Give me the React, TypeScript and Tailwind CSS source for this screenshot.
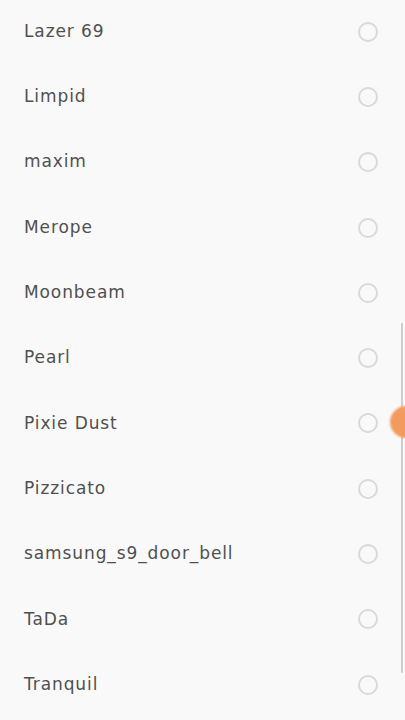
const sounds = [
  "Lazer 69",
  "Limpid",
  "maxim",
  "Merope",
  "Moonbeam",
  "Pearl",
  "Pixie Dust",
  "Pizzicato",
  "samsung_s9_door_bell",
  "TaDa",
  "Tranquil",
];

export default function App() {
  return (
    <div className="relative h-[720px] w-[405px] overflow-hidden bg-[#f9f9f9] font-['DejaVu_Sans',sans-serif]">
      <ul className="-mt-[1px] flex flex-col">
        {sounds.map((name) => (
          <li key={name} className="flex h-[65.3px] items-center justify-between pl-[24px] pr-[27px]">
            <span className="text-[17px] tracking-[0.9px] text-[#505050]">{name}</span>
            <span className="h-[20px] w-[20px] rounded-full border-2 border-[#d9d9d9]" />
          </li>
        ))}
      </ul>
      <div className="absolute right-[2px] top-[323px] h-[350px] w-[2px] rounded-full bg-[#cfcfcf]" />
      <div className="absolute left-[390px] top-[406px] h-[32px] w-[32px] rounded-full bg-[#f39a5e] blur-[1px]" />
    </div>
  );
}
